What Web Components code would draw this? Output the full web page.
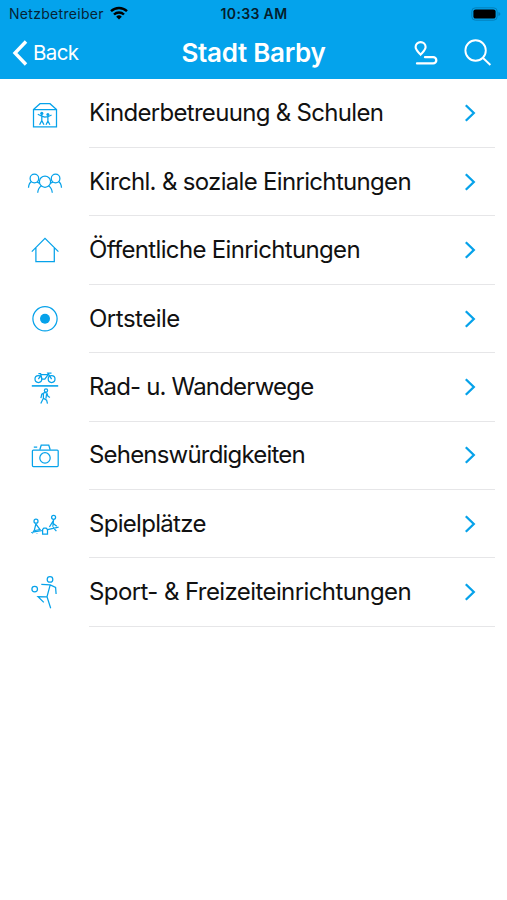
<!DOCTYPE html>
<html lang="de">
<head>
<meta charset="utf-8">
<title>Stadt Barby</title>
<style>
  body {
    margin: 0;
    background: #fff;
    font-family: Inter, "Liberation Sans", sans-serif;
    --accent: #06a2ea;
    --line: #e6e6e8;
  }
</style>
</head>
<body>
<city-app></city-app>

<script>
// line icons, drawn on a 40x68 area (icon column of one row)
const ICONS = {
  school: `
    <path d="M8.5 29.5h23v17.3h-23zL15 23.7h10l6.5 5.8"/>
    <circle class="fill" cx="16.8" cy="33.4" r="1.6"/><circle class="fill" cx="22.9" cy="34.6" r="1.5"/>
    <path d="M12.8 34.2l4 2 3 .9 3-.4 3.8-1.7M16.8 35v5.6l-2.2 4.2M16.8 40.6l2.2 4.2M22.9 36v5l-1.9 3.8M22.9 41l2 3.8"/>`,
  people: `
    <circle cx="20" cy="33.7" r="5.6"/><circle cx="9.4" cy="30.5" r="4.3"/><circle cx="30.6" cy="30.5" r="4.3"/>
    <path d="M3.5 39.7c.2-3 1-5 3-6.2M36.5 39.7c-.2-3-1-5-3-6.2M12 33.9l2.8 1.6M28 33.9l-2.8 1.6M12.7 44.8c.3-3.3 1.7-5.7 4-7M27.3 44.8c-.3-3.3-1.7-5.7-4-7"/>`,
  house: `<path d="M6.8 35.6L20 22.4l13.4 13.2M10.9 32v13.7h18.4V32"/>`,
  target: `<circle cx="20" cy="33.8" r="12.1"/><circle class="fill" cx="20" cy="33.8" r="5"/>`,
  trails: `
    <path stroke-width="1.6" d="M6.8 32.9h26.4"/>
    <circle cx="13.4" cy="26.1" r="3.4"/><circle cx="26.6" cy="26.1" r="3.4"/>
    <path d="M13.4 26.1l2.9-4.4h6.9l-3.4 4.4h-3l-1.2-5.4h-2.2M26.6 26.1L22.8 20h3.7"/>
    <circle cx="21" cy="37.5" r="1.6"/>
    <path d="M20 39.4l-3.2 1.8-.9 4M20 39.4l1.9.8 1 3 2 1.4M18.4 41v4.2l-2.6 5.3M18.4 45.2l3.2 2 .9 3.4M21.6 41l-.7 4.6"/>`,
  camera: `
    <rect x="7.4" y="28" width="25.8" height="16.6" rx="1"/>
    <circle cx="20" cy="35.9" r="5.2"/>
    <path d="M14.8 27.8l1.4-4.6h7.6l1.4 4.6M8.8 25h3.4"/>`,
  seesaw: `
    <circle cx="11" cy="31.2" r="2"/><circle cx="28.6" cy="27.3" r="2"/>
    <path d="M6.2 42.5l11.5-2M22.6 39.6l11-2.4M11 33.4l-1.8 7.4M11 34.2l4 5.4-5 .9M9.7 39.7l-2.4 3.7M10 41l2.4 2.4M28.6 29.6l-.8 7.2M28.4 30.6l-4 6.4M28.2 33.5l3.6 2.8M28 37.4l3.4 3.7"/>
    <path d="M17.6 44.2v-4.6l1.2-1.4h2.4l1.3 1.4v4.6z"/>`,
  sport: `
    <circle cx="9.7" cy="31.1" r="2.8"/><circle cx="25" cy="21.4" r="2.8"/>
    <path d="M16.3 26.3l8.9.6 5.4 2.6.5 6.5M25.2 26.9L22 38.8l3.7 11.4M22 38.8l-9-.2 5.8 5.8"/>`
};

// icon, label, letter spacing in px
const ROWS = [
  ['school', 'Kinderbetreuung & Schulen', -.69],
  ['people', 'Kirchl. & soziale Einrichtungen', -.68],
  ['house', 'Öffentliche Einrichtungen', -.66],
  ['target', 'Ortsteile', -.5],
  ['trails', 'Rad- u. Wanderwege', -.82],
  ['camera', 'Sehenswürdigkeiten', -.8],
  ['seesaw', 'Spielplätze', -.7],
  ['sport', 'Sport- & Freizeiteinrichtungen', -.59]
];

class StatusBar extends HTMLElement {
  constructor() {
    super();
    this.attachShadow({ mode: 'open' });
  }

  connectedCallback() {
    this.shadowRoot.innerHTML = `
      <style>
        :host {
          display: grid;
          grid-template-columns: 1fr auto 1fr;
          align-items: center;
          height: 27px;
          padding: 0 6px 0 9px;
          box-sizing: border-box;
          font-size: 14px;
          color: #062435;
        }
        .carrier { display: flex; align-items: center; gap: 6px; letter-spacing: .3px; }
        .time { font-weight: 600; letter-spacing: .35px; color: #041e2c; margin-right: 2px; }
        .battery { justify-self: end; }
        svg { display: block; }
        .wifi { margin-top: -2px; }
      </style>
      <div class="carrier">
        <span>Netzbetreiber</span>
        <svg class="wifi" width="18" height="14" viewBox="0 0 18 14" fill="none" stroke="#000" stroke-width="2.4">
          <path d="M1 5.2a11.6 11.6 0 0 1 16 0M4 8.5a7.2 7.2 0 0 1 10 0"/>
          <path d="M9 13.4L6.2 10.7a4 4 0 0 1 5.6 0z" fill="#000" stroke="none"/>
        </svg>
      </div>
      <span class="time">10:33 AM</span>
      <svg class="battery" width="30" height="14" viewBox="0 0 30 14">
        <rect x=".8" y=".8" width="25.4" height="12.4" rx="3.6" fill="none" stroke="#0380bb"/>
        <rect x="2.4" y="2.4" width="22.2" height="9.2" rx="2.2"/>
        <path d="M27.4 5v4q2-.6 2-2t-2-2z" fill="#0380bb"/>
      </svg>
    `;
  }
}

class NavBar extends HTMLElement {
  constructor() {
    super();
    this.attachShadow({ mode: 'open' });
  }

  connectedCallback() {
    this.shadowRoot.innerHTML = `
      <style>
        :host {
          display: grid;
          grid-template-columns: 1fr auto 1fr;
          align-items: center;
          height: 52px;
          padding: 0 15px 1px 12px;
          box-sizing: border-box;
          color: #fff;
        }
        .back { display: flex; align-items: center; gap: 5px; font-size: 20.5px; letter-spacing: -.6px; }
        .title { font-size: 26px; font-weight: 600; letter-spacing: -.3px; margin-left: 3px; }
        .actions { display: flex; justify-content: flex-end; align-items: center; gap: 26px; }
        svg { display: block; fill: none; stroke: #fff; }
      </style>
      <div class="back">
        <svg width="16" height="26" viewBox="0 0 16 26" stroke-width="3.4"><path d="M14 1.5L3 13l11 11.5"/></svg>
        <span>Back</span>
      </div>
      <div class="title"><slot></slot></div>
      <div class="actions">
        <svg width="25" height="26" viewBox="0 0 25 26" stroke-width="2.1">
          <path d="M7.6 14.6C5.2 12 2.6 10 2.6 7.1a5 5 0 0 1 10 0c0 2.9-2.6 4.9-5 7.5z"/>
          <path stroke-width="2.3" stroke-linecap="round" d="M12 17.2h8.2a3.1 3.1 0 0 1 0 6.2H4"/>
        </svg>
        <svg width="28" height="28" viewBox="0 0 28 28" stroke-width="1.9"><circle cx="11.6" cy="11.5" r="10.2"/><path d="M18.8 18.8l7.6 7.2"/></svg>
      </div>
    `;
  }
}

class CategoryRow extends HTMLElement {
  constructor() {
    super();
    this.attachShadow({ mode: 'open' });
  }

  connectedCallback() {
    this.shadowRoot.innerHTML = `
      <style>
        :host {
          display: flex;
          height: 68.4px;
          padding: 0 12px 0 25px;
        }
        svg { display: block; fill: none; stroke: var(--accent); flex: none; }
        .icon { width: 40px; height: 68px; margin-right: 23.5px; stroke-width: 1.25; }
        .fill { fill: var(--accent); stroke: none; }
        .body {
          flex: 1;
          display: flex;
          align-items: center;
          justify-content: space-between;
          border-bottom: 1px solid var(--line);
          padding-right: 19px;
        }
        .label {
          font-size: 24px;
          line-height: 30px;
          letter-spacing: ${this.getAttribute('tracking')}px;
          color: #111;
          white-space: nowrap;
          padding-left: .5px;
        }
      </style>
      <svg class="icon" viewBox="0 0 40 68">${ICONS[this.getAttribute('icon')]}</svg>
      <div class="body">
        <span class="label"><slot></slot></span>
        <svg width="12" height="18" viewBox="0 0 12 18" stroke-width="2.3"><path d="M1.8 1.2L9.8 9l-8 7.8"/></svg>
      </div>
    `;
  }
}

class CityApp extends HTMLElement {
  constructor() {
    super();
    this.attachShadow({ mode: 'open' });
  }

  connectedCallback() {
    const rows = ROWS.map(([icon, label, tracking]) =>
      `<category-row icon="${icon}" tracking="${tracking}">${label.replace('&', '&amp;')}</category-row>`).join('');

    this.shadowRoot.innerHTML = `
      <style>
        :host { display: block; min-height: 900px; }
        header { background: #04a3ec; height: 79px; }
        main { padding-top: .7px; }
      </style>
      <header>
        <status-bar></status-bar>
        <nav-bar>Stadt Barby</nav-bar>
      </header>
      <main>${rows}</main>
    `;
  }
}

customElements.define('status-bar', StatusBar);
customElements.define('nav-bar', NavBar);
customElements.define('category-row', CategoryRow);
customElements.define('city-app', CityApp);
</script>
</body>
</html>
